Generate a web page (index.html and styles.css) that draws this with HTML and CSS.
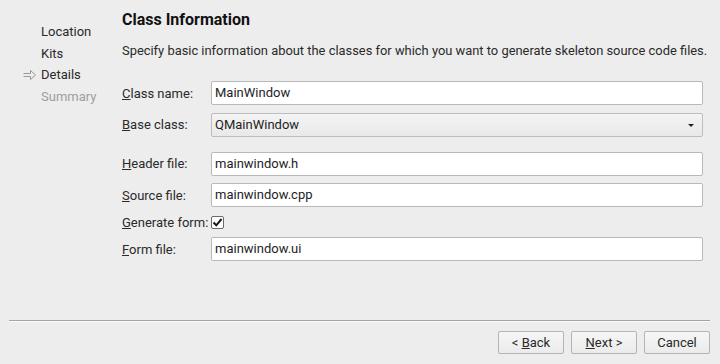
FILE: index.html
```html
<!DOCTYPE html>
<html lang="en">
<head>
    <meta charset="UTF-8">
    <title>Class Information</title>
    <link rel="stylesheet" href="styles.css">
</head>
<body>
<div class="wizard">
    <div class="main">
        <ul class="steps">
            <li class="step">Location</li>
            <li class="step">Kits</li>
            <li class="step current">
                <svg class="arrow" width="14" height="12" viewBox="0 0 14 12"><path d="M0.5 4.5 H7.5 V1.5 L12.5 6 L7.5 10.5 V7.5 H0.5" fill="none" stroke="#9a9a9a" stroke-width="1"/></svg>
                Details
            </li>
            <li class="step todo">Summary</li>
        </ul>
        <div class="page">
            <h1 class="title">Class Information</h1>
            <p class="desc">Specify basic information about the classes for which you want to generate skeleton source code files.</p>
            <div class="form">
                <label class="label"><u>C</u>lass name:</label>
                <div class="field">MainWindow</div>
                <label class="label"><u>B</u>ase class:</label>
                <div class="field combo">QMainWindow<span class="drop"></span></div>
                <div class="spacer"></div>
                <label class="label"><u>H</u>eader file:</label>
                <div class="field">mainwindow.h</div>
                <label class="label"><u>S</u>ource file:</label>
                <div class="field">mainwindow.cpp</div>
                <label class="label"><u>G</u>enerate form:</label>
                <div class="check-row">
                    <span class="check">
                        <svg width="11" height="11" viewBox="0 0 11 11"><path d="M1.5 5.5 L4.3 8.3 L9.5 2" fill="none" stroke="#1a1a1a" stroke-width="2"/></svg>
                    </span>
                </div>
                <label class="label"><u>F</u>orm file:</label>
                <div class="field">mainwindow.ui</div>
            </div>
        </div>
    </div>
    <div class="footer">
        <div class="rule"></div>
        <div class="buttons">
            <button class="btn">&lt; <u>B</u>ack</button>
            <button class="btn"><u>N</u>ext &gt;</button>
            <button class="btn">Cancel</button>
        </div>
    </div>
</div>
</body>
</html>
```

FILE: styles.css
```css
*{padding:0;margin:0;box-sizing:border-box;}
body{background:#ededed;font-family:Roboto,"Liberation Sans",sans-serif;font-size:13px;color:#1e1e1e;}
.wizard{height:364px;display:flex;flex-direction:column;}
.main{flex:1;display:flex;}

.steps{list-style:none;width:122px;flex-shrink:0;padding:21px 0 0 41px;}
.step{position:relative;height:21.7px;line-height:21.7px;color:#2a2a2a;white-space:nowrap;}
.step.todo{color:#9e9e9e;}
.arrow{position:absolute;left:-18px;top:5px;}

.page{flex:1;min-width:0;padding:9px 17px 0 0;}
.title{font-size:16px;font-weight:bold;line-height:22px;color:#111;}
.desc{margin-top:10px;line-height:20px;color:#2a2a2a;white-space:nowrap;font-size:12.9px;}

.form{display:grid;grid-template-columns:89px 1fr;row-gap:7.5px;margin-top:20px;align-items:center;}
.label{color:#2a2a2a;white-space:nowrap;}
.field{height:24px;line-height:22px;padding:0 4px 0 3px;background:#fff;border:1px solid #b9b9b9;border-radius:2px;color:#1e1e1e;}
.combo{position:relative;background:linear-gradient(#f4f4f4,#e9e9e9);border-color:#bdbdbd;}
.drop{position:absolute;right:8px;top:10px;border-left:3px solid transparent;border-right:3px solid transparent;border-top:3px solid #222;}
.spacer{grid-column:1 / span 2;height:0;}
.check-row{height:14px;display:flex;align-items:center;}
.check{width:13px;height:13px;border:1px solid #6a6a6a;border-radius:2px;background:#fff;display:flex;align-items:center;justify-content:center;}

.footer{height:44px;padding:0 10px 0 9px;}
.rule{height:2px;border-top:1px solid #a4a4a4;border-bottom:1px solid #fbfbfb;}
.buttons{display:flex;justify-content:flex-end;gap:7px;margin-top:9px;}
.btn{width:66px;height:23px;font-family:Roboto,"Liberation Sans",sans-serif;font-size:13px;color:#2a2a2a;background:linear-gradient(#f6f6f6,#ebebeb);border:1px solid #b4b4b4;border-radius:2px;}
```
